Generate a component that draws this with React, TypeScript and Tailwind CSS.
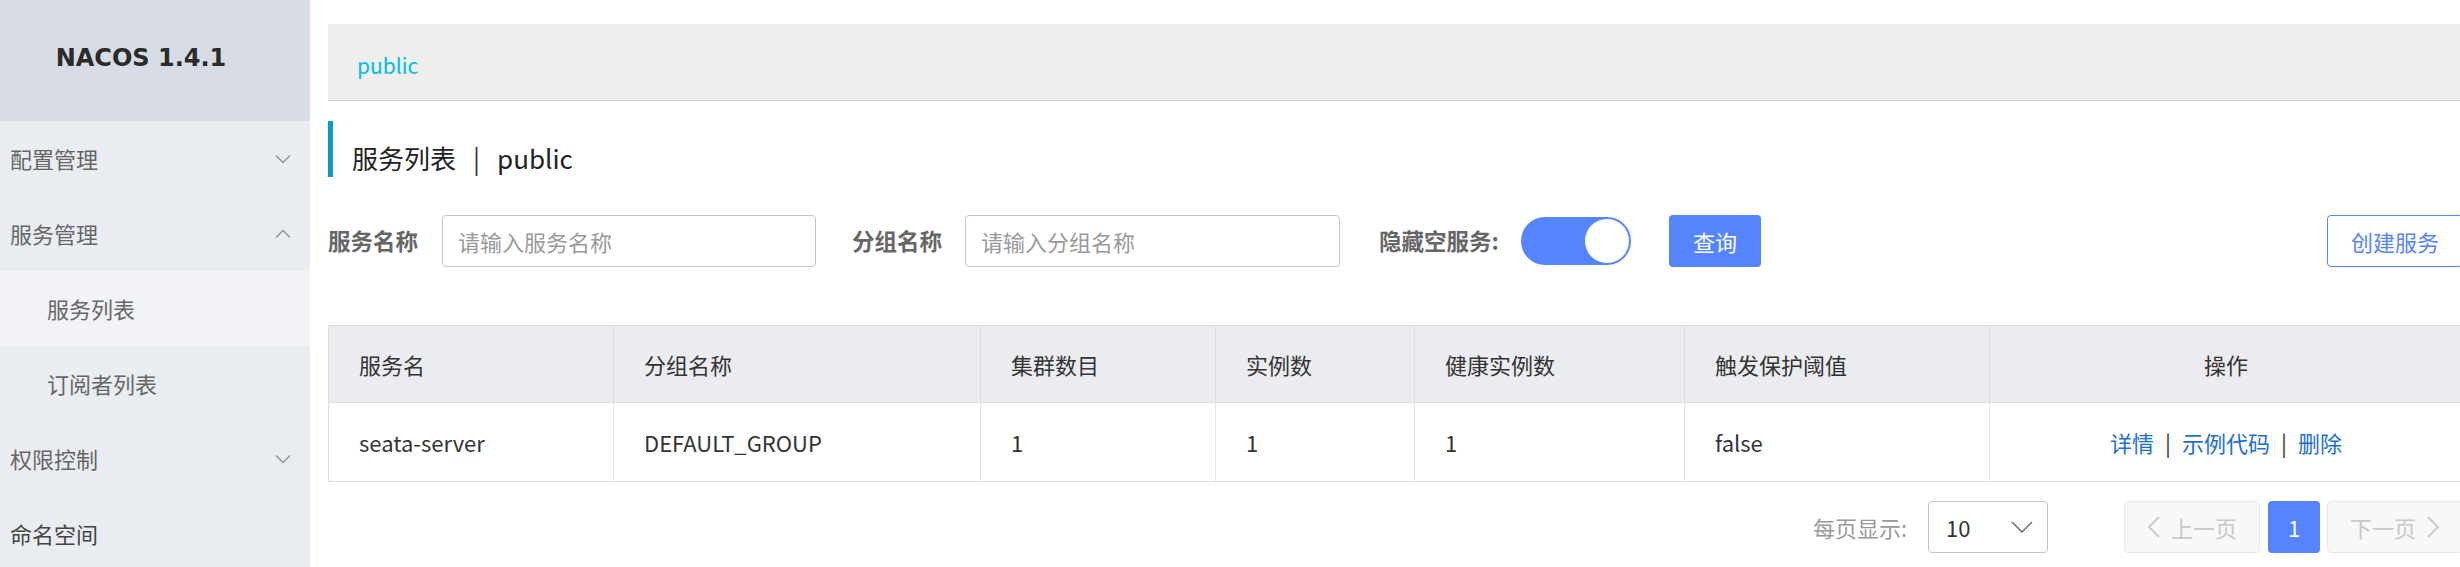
import React from "react";

const FONT = { fontFamily: '"Noto Sans CJK SC", "Noto Sans", sans-serif' };

function ChevronDown() {
  return (
    <svg width="16" height="10" viewBox="0 0 16 10" fill="none">
      <path d="M1 1.5 L8 8.5 L15 1.5" stroke="#8a8f99" strokeWidth="1.3" />
    </svg>
  );
}
function ChevronUp() {
  return (
    <svg width="16" height="10" viewBox="0 0 16 10" fill="none">
      <path d="M1 8.5 L8 1.5 L15 8.5" stroke="#8a8f99" strokeWidth="1.3" />
    </svg>
  );
}

function MenuItem({ label, icon, sub, active, dark }: { label: string; icon?: "down" | "up"; sub?: boolean; active?: boolean; dark?: boolean }) {
  return (
    <div
      className={
        "h-[75px] flex items-center justify-between pr-[19px] text-[22px] " +
        (sub ? "pl-[47px] " : "pl-[10px] ") +
        (active ? "bg-[#f1f3f7] " : "") +
        (dark ? "text-[#444]" : "text-[#666]")
      }
    >
      <span>{label}</span>
      {icon === "down" && <ChevronDown />}
      {icon === "up" && <ChevronUp />}
    </div>
  );
}

export default function App() {
  const cols = ["服务名", "分组名称", "集群数目", "实例数", "健康实例数", "触发保护阈值", "操作"];
  const row = ["seata-server", "DEFAULT_GROUP", "1", "1", "1", "false"];
  return (
    <div className="flex w-[2460px] h-[567px] overflow-hidden bg-white" style={FONT}>
      <aside className="w-[310px] shrink-0 h-full bg-[#e9ecf1]">
        <div className="h-[121px] bg-[#d8dde5] flex items-center justify-center pb-[6px] pr-[28px]">
          <span className="text-[24px] font-bold text-[#2b2b2b]" style={{ fontFamily: '"DejaVu Sans", sans-serif' }}>
            NACOS 1.4.1
          </span>
        </div>
        <MenuItem label="配置管理" icon="down" />
        <MenuItem label="服务管理" icon="up" />
        <MenuItem label="服务列表" sub active />
        <MenuItem label="订阅者列表" sub />
        <MenuItem label="权限控制" icon="down" />
        <MenuItem label="命名空间" dark />
      </aside>
      <main className="flex-1 min-w-0 pl-[18px] pt-[24px]">
        <div className="w-[2135px]">
          <div className="h-[77px] bg-[#eeeeee] border-b border-[#cfcfcf] flex items-center pl-[29px] pt-[8px]">
            <span className="text-[21px] text-[#00bfdc]">public</span>
          </div>
          <div className="mt-[20px] h-[56px] border-l-[5px] border-[#0d97cf] flex items-center pl-[19px] pt-[16px] text-[26px] text-[#222]">
            <span>服务列表</span>
            <span className="mx-[17px] text-[#333]">|</span>
            <span>public</span>
          </div>
          <div className="mt-[38px] h-[52px] flex items-center">
            <span className="w-[90px] whitespace-nowrap text-[22.5px] font-bold text-[#666]">服务名称</span>
            <div className="ml-[24px] w-[374px] h-[52px] border border-[#c4c6cf] rounded-[4px] flex items-center pl-[15px] text-[22px] text-[#999]">
              请输入服务名称
            </div>
            <span className="ml-[36px] w-[90px] whitespace-nowrap text-[22.5px] font-bold text-[#666]">分组名称</span>
            <div className="ml-[23px] w-[375px] h-[52px] border border-[#c4c6cf] rounded-[4px] flex items-center pl-[15px] text-[22px] text-[#999]">
              请输入分组名称
            </div>
            <span className="ml-[39px] w-[120px] whitespace-nowrap text-[22.5px] font-bold text-[#666]">隐藏空服务:</span>
            <div className="ml-[22px] w-[110px] h-[48px] rounded-full bg-[#5584ff] flex items-center justify-end pr-[1px]">
              <div className="w-[46px] h-[46px] rounded-full bg-white border border-[#5584ff]" />
            </div>
            <button className="ml-[38px] w-[92px] h-[52px] rounded-[4px] bg-[#5584ff] text-white text-[22px]">查询</button>
            <div className="flex-1" />
            <button className="w-[136px] h-[52px] rounded-[4px] border border-[#5584ff] text-[#5584ff] text-[22px] bg-white">
              创建服务
            </button>
          </div>
          <div className="mt-[58px] border border-[#dcdee3] grid grid-cols-[285px_367px_235px_199px_270px_305px_1fr]">
            {cols.map((c, i) => (
              <div
                key={c}
                className={
                  "h-[77px] bg-[#ebecf0] border-b border-[#dcdee3] flex items-center text-[22px] text-[#333] " +
                  (i < 6 ? "border-r pl-[30px] " : "justify-center ")
                }
              >
                {c}
              </div>
            ))}
            {row.map((c, i) => (
              <div key={i} className="h-[78px] border-r border-[#e3e4e8] flex items-center pl-[30px] text-[22px] text-[#333]">
                {c}
              </div>
            ))}
            <div className="h-[78px] flex items-center justify-center text-[22px]">
              <span className="text-[#1a6fd6]">详情</span>
              <span className="mx-[11px] text-[#333]">|</span>
              <span className="text-[#1a6fd6]">示例代码</span>
              <span className="mx-[11px] text-[#333]">|</span>
              <span className="text-[#1a6fd6]">删除</span>
            </div>
          </div>
          <div className="mt-[19px] h-[52px] flex items-center justify-end">
            <span className="text-[22px] text-[#999]">每页显示:</span>
            <div className="ml-[21px] w-[120px] h-[52px] border border-[#c4c6cf] rounded-[4px] flex items-center justify-between pl-[17px] pr-[14px]">
              <span className="text-[22px] text-[#333]">10</span>
              <svg width="22" height="12" viewBox="0 0 22 12" fill="none">
                <path d="M1 1 L11 11 L21 1" stroke="#666" strokeWidth="1.4" />
              </svg>
            </div>
            <div className="ml-[76px] w-[136px] h-[52px] rounded-[4px] border border-[#e6e7eb] bg-[#f7f8fa] flex items-center justify-center gap-[10px] text-[22px] text-[#c8c8c8]">
              <svg width="14" height="24" viewBox="0 0 14 24" fill="none">
                <path d="M12 2 L2 12 L12 22" stroke="#c8c8c8" strokeWidth="1.8" />
              </svg>
              <span>上一页</span>
            </div>
            <div className="ml-[8px] w-[52px] h-[52px] rounded-[4px] bg-[#5584ff] flex items-center justify-center text-[22px] text-white">
              1
            </div>
            <div className="ml-[7px] w-[136px] h-[52px] rounded-[4px] border border-[#e6e7eb] bg-[#f7f8fa] flex items-center justify-center gap-[10px] text-[22px] text-[#c8c8c8]">
              <span>下一页</span>
              <svg width="14" height="24" viewBox="0 0 14 24" fill="none">
                <path d="M2 2 L12 12 L2 22" stroke="#c8c8c8" strokeWidth="1.8" />
              </svg>
            </div>
          </div>
        </div>
      </main>
    </div>
  );
}
